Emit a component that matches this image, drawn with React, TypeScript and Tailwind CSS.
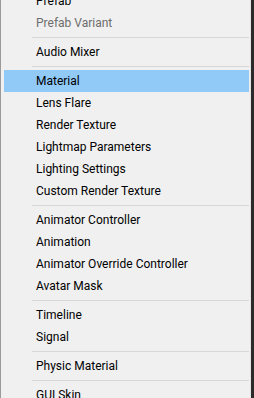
import React from "react";

type Entry = { label: string; disabled?: boolean; active?: boolean } | "sep";

const entries: Entry[] = [
  { label: "Prefab" },
  { label: "Prefab Variant", disabled: true },
  "sep",
  { label: "Audio Mixer" },
  "sep",
  { label: "Material", active: true },
  { label: "Lens Flare" },
  { label: "Render Texture" },
  { label: "Lightmap Parameters" },
  { label: "Lighting Settings" },
  { label: "Custom Render Texture" },
  "sep",
  { label: "Animator Controller" },
  { label: "Animation" },
  { label: "Animator Override Controller" },
  { label: "Avatar Mask" },
  "sep",
  { label: "Timeline" },
  { label: "Signal" },
  "sep",
  { label: "Physic Material" },
  "sep",
  { label: "GUI Skin" },
];

export default function App() {
  return (
    <div className="flex h-[398px] w-[254px] overflow-hidden bg-[#2b2b2b]">
      <div
        className="flex w-[251px] flex-col border-l border-r border-l-[#9a9a9a] border-r-[#e3e3e3] bg-[#f0f0f0] pl-[3px] pr-[1px] text-[12px] text-black"
        style={{ fontFamily: 'Roboto, "Noto Sans", sans-serif' }}
      >
        <div className="-mt-[10px] flex flex-col">
          {entries.map((e, i) =>
            e === "sep" ? (
              <div key={i} className="flex h-[7px] shrink-0 items-center pl-[28px]">
                <div className="h-px flex-1 bg-[#d7d7d7]" />
              </div>
            ) : (
              <div
                key={i}
                className={`flex h-[22px] shrink-0 items-center pl-[32px] ${
                  e.active ? "bg-[#91c9f7]" : ""
                } ${e.disabled ? "text-[#6d6d6d]" : ""}`}
              >
                {e.label}
              </div>
            )
          )}
        </div>
      </div>
    </div>
  );
}
